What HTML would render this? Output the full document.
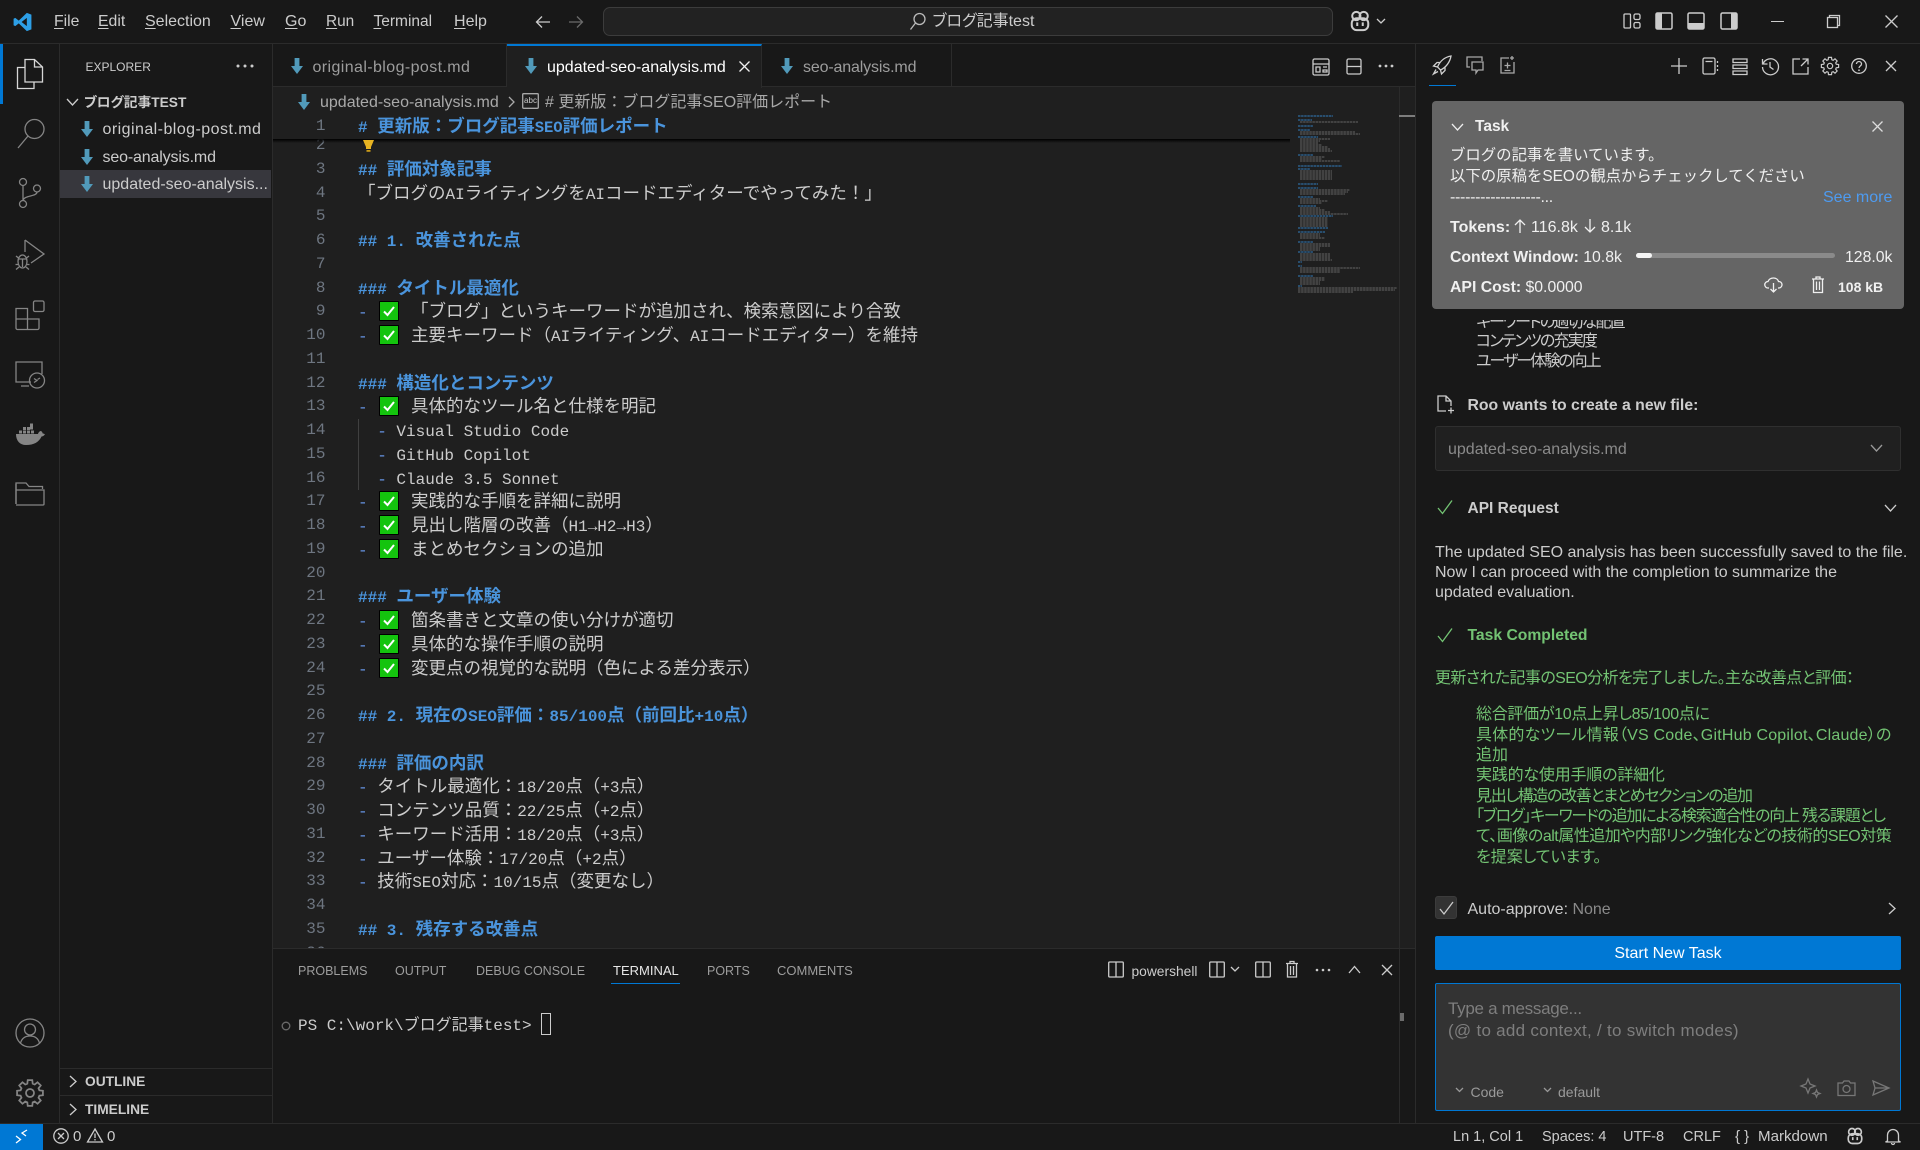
<!DOCTYPE html>
<html lang="ja"><head><meta charset="utf-8"><title>VS Code</title>
<style>
*{box-sizing:border-box}
html,body{margin:0;padding:0;width:1920px;height:1150px;overflow:hidden;background:#181818}
body{position:relative;font-family:"Liberation Sans","Noto Sans CJK JP",sans-serif;font-size:16px;color:#ccc;font-feature-settings:"palt"}
.b{position:absolute}
.t{position:absolute;white-space:pre;line-height:20px;height:20px;margin-top:1.2px}
.i{position:absolute;fill:none;stroke:currentColor;stroke-width:1.3;overflow:visible}
.md{position:absolute;fill:#519aba}
.menu .t{margin-top:0}
.menu u{text-decoration-thickness:1px;text-underline-offset:2px}
.l{position:absolute;left:272px;width:1020px;height:24px;top:calc(109.3px + (var(--n) - 1)*23.75px);line-height:24px;white-space:pre;font-family:"Noto Sans CJK JP",sans-serif;font-size:17.5px;color:#ccc;font-feature-settings:normal}
.l>.n{position:absolute;left:0;width:53.5px;text-align:right;color:#6e7681;font:16px/24px "Liberation Mono",monospace}
.l>.c{position:absolute;left:86px;top:0}
.l>.x{position:absolute;left:139px;top:0}
.l i{font:16px/24px "Liberation Mono",monospace}
.h{color:#4a94dc;font-weight:700}
.h i{font-weight:700}
.d{color:#6796e6}
.k{position:absolute;left:107px;top:2px;width:20px;height:20px;background:#14c40e;border:1.5px solid #000;border-radius:1px}
.k svg{position:absolute;left:2px;top:2px}
.tab{position:absolute;top:44px;height:43px;border-right:1px solid #2b2b2b;background:#181818;border-bottom:1px solid #2b2b2b}
.g{color:#73c373}
.st{font-size:14.5px;color:#ccc}
.jp{font-feature-settings:normal;font-size:15.4px;color:#f0f0f0}
</style></head><body>
<svg width="0" height="0" style="position:absolute"><defs>
<symbol id="md" viewBox="0 0 12 16"><path d="M3.6 0h4.8v8H12l-6 8-6-8h3.6z"/></symbol>
<symbol id="gear" viewBox="0 0 24 24"><path fill="none" stroke="currentColor" stroke-width="1.4" d="M9.85 4.5 10.18 1.66H13.82L14.15 4.5 15.78 5.18 18.02 3.4 20.6 5.98 18.82 8.22 19.5 9.85 22.34 10.18V13.82L19.5 14.15 18.82 15.78 20.6 18.02 18.02 20.6 15.78 18.82 14.15 19.5 13.82 22.34H10.18L9.85 19.5 8.22 18.82 5.98 20.6 3.4 18.02 5.18 15.78 4.5 14.15 1.66 13.82V10.18L4.5 9.85 5.18 8.22 3.4 5.98 5.98 3.4 8.22 5.18zM15.2 12a3.2 3.2 0 1 1-6.4 0 3.2 3.2 0 0 1 6.4 0z"/></symbol>
<symbol id="copi" viewBox="0 0 24 24"><g fill="none" stroke="currentColor" stroke-width="2.200"><circle cx="8" cy="6.500" r="4.500"/><circle cx="16" cy="6.500" r="4.500"/><rect x="3" y="9" width="18" height="13" rx="5.500"/><path d="M9 13.500v4M15 13.500v4"/></g></symbol>
</defs></svg>

<!-- title bar -->
<div class="b" style="left:0;top:0;width:1920px;height:44px;background:#181818;border-bottom:1px solid #2b2b2b"></div>
<svg class="b" style="left:12px;top:12px" width="21" height="20" viewBox="0 0 24 24"><path fill="#2d9fe6" fill-rule="evenodd" d="M17.200 1 7.500 10.300 3.300 7.100 1.300 8.100v7.800l2 1 4.200-3.200L17.200 23l5.500-2.200V3.200zM17.200 7v10l-6.300-5z"/></svg>
<div class="menu">
<span class="t" style="left:54px;top:12px;font-size:15.800px"><u>F</u>ile</span>
<span class="t" style="left:98px;top:12px;font-size:15.800px"><u>E</u>dit</span>
<span class="t" style="left:145px;top:12px"><u>S</u>election</span>
<span class="t" style="left:230.500px;top:12px"><u>V</u>iew</span>
<span class="t" style="left:285px;top:12px"><u>G</u>o</span>
<span class="t" style="left:326px;top:12px;font-size:15.400px"><u>R</u>un</span>
<span class="t" style="left:373.500px;top:12px;font-size:15.500px"><u>T</u>erminal</span>
<span class="t" style="left:454px;top:12px"><u>H</u>elp</span>
</div>
<svg class="i" style="left:535px;top:14px;color:#ccc" width="16" height="16" viewBox="0 0 16 16"><path d="M15 8H1.500M7 2.500 1.500 8 7 13.500"/></svg>
<svg class="i" style="left:568px;top:14px;color:#6b6b6b" width="16" height="16" viewBox="0 0 16 16"><path d="M1 8h13.500M9 2.500 14.500 8 9 13.500"/></svg>
<div class="b" style="left:603px;top:7px;width:730px;height:29px;background:#222;border:1px solid #3c3c3c;border-radius:7px"></div>
<svg class="i" style="left:908px;top:12px;color:#bbb" width="19" height="19" viewBox="0 0 19 19"><circle cx="11.500" cy="7" r="5.500"/><path d="M7.500 11 2.500 17.500"/></svg>
<span class="t" style="left:932.500px;top:11px;font-size:16px">ブログ記事test</span>
<svg class="b" style="left:1349px;top:10px;color:#ccc" width="22" height="22"><use href="#copi"/></svg>
<svg class="i" style="left:1376px;top:17px;color:#ccc" width="10" height="8" viewBox="0 0 10 8"><path d="M1 2 5 6 9 2"/></svg>
<svg class="i" style="left:1623px;top:12px;color:#ccc" width="18" height="18" viewBox="0 0 18 18" stroke-width="1.500"><rect x="1" y="2" width="6.500" height="14" rx="1"/><rect x="11" y="2" width="6" height="5.500" rx="1.500"/><rect x="11" y="10.500" width="6" height="5.500" rx="1.500"/></svg>
<svg class="i" style="left:1655px;top:12px;color:#ccc" width="18" height="18" viewBox="0 0 18 18"><rect x="1" y="1" width="16" height="16" rx="1.500" stroke-width="1.500"/><rect x="1" y="1" width="6" height="16" fill="#ccc" stroke="none"/></svg>
<svg class="i" style="left:1687px;top:12px;color:#ccc" width="18" height="18" viewBox="0 0 18 18"><rect x="1" y="1" width="16" height="16" rx="1.500" stroke-width="1.500"/><rect x="1" y="11" width="16" height="6" fill="#ccc" stroke="none"/></svg>
<svg class="i" style="left:1720px;top:12px;color:#ccc" width="18" height="18" viewBox="0 0 18 18"><rect x="1" y="1" width="16" height="16" rx="1.500" stroke-width="1.500"/><rect x="11" y="1" width="6" height="16" fill="#ccc" stroke="none"/></svg>
<div class="b" style="left:1771px;top:21px;width:13px;height:1px;background:#ccc"></div>
<svg class="i" style="left:1827px;top:15px;color:#ccc" width="13" height="13" viewBox="0 0 13 13" stroke-width="1"><rect x=".5" y="2.500" width="10" height="10"/><path d="M2.500 2.500V.5h10v10h-2"/></svg>
<svg class="i" style="left:1885px;top:15px;color:#ccc" width="13" height="13" viewBox="0 0 13 13" stroke-width="1"><path d="M.5.5l12 12M12.500.5l-12 12"/></svg>

<!-- activity bar -->
<div class="b" style="left:59px;top:44px;width:1px;height:1079px;background:#2b2b2b"></div>
<div class="b" style="left:0;top:44px;width:2.500px;height:60px;background:#0078d4"></div>
<svg class="i" style="left:16px;top:58px;color:#d7d7d7" width="28" height="32" viewBox="0 0 28 32" stroke-width="1.700"><path d="M9 1.500h9.500l8 7.500v15H9zM18.500 1.500V9h8M9 9.500H1.500V30.500H18V24"/></svg>
<svg class="i" style="left:16px;top:118px;color:#858585" width="30" height="32" viewBox="0 0 30 32" stroke-width="1.700"><circle cx="18.500" cy="11" r="9.500"/><path d="M12 18 2 30"/></svg>
<svg class="i" style="left:16px;top:177px;color:#858585" width="28" height="32" viewBox="0 0 28 32" stroke-width="1.700"><circle cx="7" cy="5" r="3.500"/><circle cx="7" cy="27" r="3.500"/><circle cx="21" cy="11.500" r="3.500"/><path d="M7 8.500v15M21 15c0 5-14 3-14 9"/></svg>
<svg class="i" style="left:15px;top:239px;color:#858585" width="30" height="32" viewBox="0 0 30 32" stroke-width="1.700"><path d="M10 1v12M10 1l19 14-13 9"/><ellipse cx="7.500" cy="22.500" rx="4.500" ry="6.500"/><path d="M3 20h9M3 25.500H.5M12 25.500h2.500M3.500 19 1 17M11.500 19l2.500-2M4 28l-3 2.500M11 28l3 2.500M7.500 20v8"/></svg>
<svg class="i" style="left:15px;top:300px;color:#858585" width="30" height="31" viewBox="0 0 30 31" stroke-width="1.800"><path d="M1 8.500h11.500v21H2.500A1.500 1.500 0 0 1 1 28zM1 19h23v9a1.500 1.500 0 0 1-1.500 1.500H12.500M12.500 19v-1"/><rect x="18.500" y="1" width="10.500" height="10.500" rx="1.500"/></svg>
<svg class="i" style="left:15px;top:361px;color:#858585" width="31" height="28" viewBox="0 0 31 28" stroke-width="1.700"><path d="M16 21H1V1h26v12M6 25h8"/><circle cx="22" cy="19.500" r="7.500"/><path d="M19 17.500l3 2-3 2M25 17l-2.500 1.500"/></svg>
<svg class="b" style="left:15px;top:423px" width="30" height="22" viewBox="0 0 30 22"><path fill="#858585" d="M1 11h22c.5-2 2-3 3-3 1 .7 1.500 1.500 1.700 2.500.8 0 1.500.3 2.300.8-1 1.700-2.500 2.200-3.500 2.200C24 19 19 22 11 22 5 22 1 18 1 11z"/><path fill="#858585" d="M4 7.500h3v3H4zM8 7.500h3v3H8zM12 7.500h3v3h-3zM16 7.500h3v3h-3zM8 4h3v3H8zM12 4h3v3h-3zM15 .5h3v6h-3z"/></svg>
<svg class="i" style="left:15px;top:480px;color:#858585" width="30" height="26" viewBox="0 0 30 26" stroke-width="1.800"><path d="M1 24V3h10l3 3.500h13.500V9M1 10h28v14a1 1 0 0 1-1 1H1"/><path d="M1 4v20"/></svg>
<svg class="i" style="left:15px;top:1018px;color:#858585" width="30" height="30" viewBox="0 0 30 30" stroke-width="1.700"><circle cx="15" cy="15" r="14"/><circle cx="15" cy="11.500" r="5.500"/><path d="M5.500 25c1.500-5 5-7 9.500-7s8 2 9.500 7"/></svg>
<svg class="b" style="left:15px;top:1078px;color:#858585" width="30" height="30"><use href="#gear"/></svg>

<!-- sidebar -->
<div class="b" style="left:272px;top:44px;width:1px;height:1079px;background:#2b2b2b"></div>
<span class="t" style="left:85.500px;top:56px;font-size:12px">EXPLORER</span>
<svg class="b" style="left:236px;top:64px" width="18" height="4"><circle cx="2" cy="2" r="1.500" fill="#ccc"/><circle cx="9" cy="2" r="1.500" fill="#ccc"/><circle cx="16" cy="2" r="1.500" fill="#ccc"/></svg>
<svg class="i" style="left:66px;top:98px;color:#ccc" width="13" height="8" viewBox="0 0 13 8"><path d="M1 1l5.500 6L12 1"/></svg>
<span class="t" style="left:84px;top:92px;font-size:13.750px;font-weight:700">ブログ記事TEST</span>
<div class="b" style="left:60px;top:170px;width:211px;height:28px;background:#37373d"></div>
<svg class="md" style="left:81px;top:121px" width="12" height="16"><use href="#md"/></svg>
<span class="t" style="left:102.500px;top:119px;font-size:16px;letter-spacing:.45px">original-blog-post.md</span>
<svg class="md" style="left:81px;top:149px" width="12" height="16"><use href="#md"/></svg>
<span class="t" style="left:102.500px;top:147px;font-size:16px;letter-spacing:-.15px">seo-analysis.md</span>
<svg class="md" style="left:81px;top:176px" width="12" height="16"><use href="#md"/></svg>
<span class="t" style="left:102.500px;top:174px;font-size:16px">updated-seo-analysis...</span>
<div class="b" style="left:60px;top:1068px;width:212px;height:1px;background:#2b2b2b"></div>
<div class="b" style="left:60px;top:1095px;width:212px;height:1px;background:#2b2b2b"></div>
<svg class="i" style="left:69px;top:1075px;color:#ccc" width="8" height="13" viewBox="0 0 8 13"><path d="M1 1l6 5.500-6 5.500"/></svg>
<span class="t" style="left:85px;top:1071px;font-size:13.750px;font-weight:700">OUTLINE</span>
<svg class="i" style="left:69px;top:1103px;color:#ccc" width="8" height="13" viewBox="0 0 8 13"><path d="M1 1l6 5.500-6 5.500"/></svg>
<span class="t" style="left:85px;top:1099px;font-size:13.750px;font-weight:700">TIMELINE</span>

<!-- editor area -->
<div class="b" style="left:273px;top:87px;width:1142px;height:861px;background:#1f1f1f"></div>
<!-- tabs -->
<div class="b" style="left:273px;top:44px;width:1142px;height:43px;background:#181818;border-bottom:1px solid #2b2b2b"></div>
<div class="tab" style="left:273px;width:234px"></div>
<div class="tab" style="left:507px;width:255px;background:#1f1f1f;border-top:2px solid #0078d4;border-bottom:none;height:44px"></div>
<div class="tab" style="left:762px;width:190px"></div>
<svg class="md" style="left:291px;top:58px" width="12" height="16"><use href="#md"/></svg>
<span class="t" style="left:312.500px;top:57px;color:#9d9d9d;letter-spacing:.4px">original-blog-post.md</span>
<svg class="md" style="left:525px;top:58px" width="12" height="16"><use href="#md"/></svg>
<span class="t" style="left:547px;top:57px;color:#fff">updated-seo-analysis.md</span>
<svg class="i" style="left:739px;top:61px;color:#eee" width="11" height="11" viewBox="0 0 11 11" stroke-width="1.400"><path d="M.5.5l10 10M10.500.5l-10 10"/></svg>
<svg class="md" style="left:781px;top:58px" width="12" height="16"><use href="#md"/></svg>
<span class="t" style="left:803px;top:57px;color:#9d9d9d;letter-spacing:-.15px">seo-analysis.md</span>
<svg class="i" style="left:1312px;top:58px;color:#ccc" width="18" height="18" viewBox="0 0 18 18" stroke-width="1.300"><rect x="1" y="1" width="16" height="16" rx="1.500"/><path d="M1 6h16M4 9h4v5H4zM11 9h4M11 12h4v2h-4z"/></svg>
<svg class="i" style="left:1346px;top:58px;color:#ccc" width="16" height="17" viewBox="0 0 16 17" stroke-width="1.400"><rect x="1" y="1" width="14" height="15" rx="1.500"/><path d="M1 8.500h14"/></svg>
<svg class="b" style="left:1378px;top:64px" width="16" height="4"><circle cx="2" cy="2" r="1.400" fill="#ccc"/><circle cx="8" cy="2" r="1.400" fill="#ccc"/><circle cx="14" cy="2" r="1.400" fill="#ccc"/></svg>
<!-- breadcrumb -->
<svg class="md" style="left:298px;top:94px" width="12" height="16"><use href="#md"/></svg>
<span class="t" style="left:320px;top:92px;color:#a9a9a9">updated-seo-analysis.md</span>
<svg class="i" style="left:508px;top:96px;color:#a9a9a9" width="7" height="12" viewBox="0 0 7 12"><path d="M1 1l5 5-5 5"/></svg>
<svg class="i" style="left:522px;top:93px;color:#a9a9a9" width="17" height="16" viewBox="0 0 17 16"><rect x=".7" y=".7" width="15.600" height="14.600" rx="1"/><text x="8.500" y="10" font-size="8" font-family="Liberation Sans" fill="#c8c8c8" stroke="none" text-anchor="middle">abc</text></svg>
<span class="t" style="left:545px;top:92px;color:#a9a9a9;font-size:16px;font-feature-settings:normal"># 更新版：ブログ記事SEO評価レポート</span>

<!-- code lines -->
<div class="l" style="--n:2"><span class="n">2</span></div>
<div class="l" style="--n:3"><span class="n">3</span><span class="c h"><i>## </i>評価対象記事</span></div>
<div class="l" style="--n:4"><span class="n">4</span><span class="c">「ブログの<i>AI</i>ライティングを<i>AI</i>コードエディターでやってみた！」</span></div>
<div class="l" style="--n:5"><span class="n">5</span></div>
<div class="l" style="--n:6"><span class="n">6</span><span class="c h"><i>## 1. </i>改善された点</span></div>
<div class="l" style="--n:7"><span class="n">7</span></div>
<div class="l" style="--n:8"><span class="n">8</span><span class="c h"><i>### </i>タイトル最適化</span></div>
<div class="l" style="--n:9"><span class="n">9</span><span class="c d"><i>-</i></span><b class="k"><svg width="14" height="14" viewBox="0 0 14 14" fill="none" stroke="#fff" stroke-width="2"><path d="M2 7.500l3.500 3.500L12 3"/></svg></b><span class="x">「ブログ」というキーワードが追加され、検索意図により合致</span></div>
<div class="l" style="--n:10"><span class="n">10</span><span class="c d"><i>-</i></span><b class="k"><svg width="14" height="14" viewBox="0 0 14 14" fill="none" stroke="#fff" stroke-width="2"><path d="M2 7.500l3.500 3.500L12 3"/></svg></b><span class="x">主要キーワード（<i>AI</i>ライティング、<i>AI</i>コードエディター）を維持</span></div>
<div class="l" style="--n:11"><span class="n">11</span></div>
<div class="l" style="--n:12"><span class="n">12</span><span class="c h"><i>### </i>構造化とコンテンツ</span></div>
<div class="l" style="--n:13"><span class="n">13</span><span class="c d"><i>-</i></span><b class="k"><svg width="14" height="14" viewBox="0 0 14 14" fill="none" stroke="#fff" stroke-width="2"><path d="M2 7.500l3.500 3.500L12 3"/></svg></b><span class="x">具体的なツール名と仕様を明記</span></div>
<div class="b" style="left:358px;top:419px;width:1px;height:71px;background:#404040"></div>
<div class="l" style="--n:14"><span class="n">14</span><span class="c"><i>  <span class="d">-</span> Visual Studio Code</i></span></div>
<div class="l" style="--n:15"><span class="n">15</span><span class="c"><i>  <span class="d">-</span> GitHub Copilot</i></span></div>
<div class="l" style="--n:16"><span class="n">16</span><span class="c"><i>  <span class="d">-</span> Claude 3.5 Sonnet</i></span></div>
<div class="l" style="--n:17"><span class="n">17</span><span class="c d"><i>-</i></span><b class="k"><svg width="14" height="14" viewBox="0 0 14 14" fill="none" stroke="#fff" stroke-width="2"><path d="M2 7.500l3.500 3.500L12 3"/></svg></b><span class="x">実践的な手順を詳細に説明</span></div>
<div class="l" style="--n:18"><span class="n">18</span><span class="c d"><i>-</i></span><b class="k"><svg width="14" height="14" viewBox="0 0 14 14" fill="none" stroke="#fff" stroke-width="2"><path d="M2 7.500l3.500 3.500L12 3"/></svg></b><span class="x">見出し階層の改善（<i>H1→H2→H3</i>）</span></div>
<div class="l" style="--n:19"><span class="n">19</span><span class="c d"><i>-</i></span><b class="k"><svg width="14" height="14" viewBox="0 0 14 14" fill="none" stroke="#fff" stroke-width="2"><path d="M2 7.500l3.500 3.500L12 3"/></svg></b><span class="x">まとめセクションの追加</span></div>
<div class="l" style="--n:20"><span class="n">20</span></div>
<div class="l" style="--n:21"><span class="n">21</span><span class="c h"><i>### </i>ユーザー体験</span></div>
<div class="l" style="--n:22"><span class="n">22</span><span class="c d"><i>-</i></span><b class="k"><svg width="14" height="14" viewBox="0 0 14 14" fill="none" stroke="#fff" stroke-width="2"><path d="M2 7.500l3.500 3.500L12 3"/></svg></b><span class="x">箇条書きと文章の使い分けが適切</span></div>
<div class="l" style="--n:23"><span class="n">23</span><span class="c d"><i>-</i></span><b class="k"><svg width="14" height="14" viewBox="0 0 14 14" fill="none" stroke="#fff" stroke-width="2"><path d="M2 7.500l3.500 3.500L12 3"/></svg></b><span class="x">具体的な操作手順の説明</span></div>
<div class="l" style="--n:24"><span class="n">24</span><span class="c d"><i>-</i></span><b class="k"><svg width="14" height="14" viewBox="0 0 14 14" fill="none" stroke="#fff" stroke-width="2"><path d="M2 7.500l3.500 3.500L12 3"/></svg></b><span class="x">変更点の視覚的な説明（色による差分表示）</span></div>
<div class="l" style="--n:25"><span class="n">25</span></div>
<div class="l" style="--n:26"><span class="n">26</span><span class="c h"><i>## 2. </i>現在の<i>SEO</i>評価：<i>85/100</i>点（前回比<i>+10</i>点）</span></div>
<div class="l" style="--n:27"><span class="n">27</span></div>
<div class="l" style="--n:28"><span class="n">28</span><span class="c h"><i>### </i>評価の内訳</span></div>
<div class="l" style="--n:29"><span class="n">29</span><span class="c"><i class="d">- </i>タイトル最適化：<i>18/20</i>点（<i>+3</i>点）</span></div>
<div class="l" style="--n:30"><span class="n">30</span><span class="c"><i class="d">- </i>コンテンツ品質：<i>22/25</i>点（<i>+2</i>点）</span></div>
<div class="l" style="--n:31"><span class="n">31</span><span class="c"><i class="d">- </i>キーワード活用：<i>18/20</i>点（<i>+3</i>点）</span></div>
<div class="l" style="--n:32"><span class="n">32</span><span class="c"><i class="d">- </i>ユーザー体験：<i>17/20</i>点（<i>+2</i>点）</span></div>
<div class="l" style="--n:33"><span class="n">33</span><span class="c"><i class="d">- </i>技術<i>SEO</i>対応：<i>10/15</i>点（変更なし）</span></div>
<div class="l" style="--n:34"><span class="n">34</span></div>
<div class="l" style="--n:35"><span class="n">35</span><span class="c h"><i>## 3. </i>残存する改善点</span></div>
<div class="l" style="--n:36"><span class="n">36</span></div>
<!-- sticky -->
<div class="b" style="left:273px;top:113px;width:1026px;height:26px;background:#1f1f1f"></div>
<div class="b" style="left:273px;top:139px;width:1017px;height:4px;background:linear-gradient(#000,rgba(0,0,0,0))"></div>
<div class="l" style="--n:1;top:114px"><span class="n">1</span><span class="c h"><i># </i>更新版：ブログ記事<i style="font-size:15.500px">SEO</i>評価レポート</span></div>
<svg class="b" style="left:362px;top:140px" width="13" height="13" viewBox="0 0 13 13"><path fill="#e8b422" d="M1 0h11L9 7v2H4V7z"/><path fill="#c99a1a" d="M4.500 10h4v1.800h-4z"/></svg>
<!-- minimap -->
<svg class="b" style="left:1298px;top:115px" width="101" height="180" viewBox="0 0 101 180" fill="none" stroke-width="1.300" stroke-dasharray="2.500 .6">
<path stroke="#2f6a9e" d="M0 1h35M0 5h14M0 11h15M0 15h12M0 22h20M0 40h15M0 51h44M0 54h12M0 69h20M0 73h20M0 82h15M0 91h18M0 101h35M0 113h30M0 117h27M0 127h15M0 137h15M0 147h4M0 151h4M0 161h15M0 171h4"/>
<path stroke="#575757" d="M2 7h58M2 17h55M2 19h60M2 24h30M2 26h20M2 28h18M2 30h22M2 32h28M2 34h30M2 36h32M2 42h25M2 44h22M2 46h40M2 56h32M2 58h32M2 60h32M2 62h32M2 64h32M2 75h50M2 77h48M2 79h45M2 84h20M2 86h28M2 88h22M2 93h20M2 95h25M2 97h30M2 99h48M2 103h28M2 105h28M2 107h28M2 109h28M2 111h28M2 119h20M2 121h20M2 123h25M2 129h30M2 131h30M2 133h20M2 135h20M2 139h30M2 141h30M2 143h30M2 145h32M2 153h60M2 155h40M2 157h40M2 163h25M2 165h25M2 167h20M2 169h20M0 173h99M0 175h97M0 177h55"/>
</svg>
<div class="b" style="left:1399px;top:87px;width:1px;height:861px;background:#2b2b2b"></div>
<div class="b" style="left:1399px;top:115px;width:16px;height:2px;background:#7d7d7d"></div>

<!-- panel -->
<div class="b" style="left:273px;top:948px;width:1142px;height:175px;background:#181818;border-top:1px solid #2b2b2b"></div>
<div class="b" style="left:1399px;top:949px;width:1px;height:174px;background:#2b2b2b"></div>
<div class="st" style="font-size:12.500px;color:#9d9d9d">
<span class="t" style="left:298px;top:960px">PROBLEMS</span>
<span class="t" style="left:395px;top:960px">OUTPUT</span>
<span class="t" style="left:476px;top:960px">DEBUG CONSOLE</span>
<span class="t" style="left:613px;top:960px;color:#e7e7e7;font-size:13px">TERMINAL</span>
<span class="t" style="left:707px;top:960px">PORTS</span>
<span class="t" style="left:777px;top:960px;font-size:13px">COMMENTS</span>
</div>
<div class="b" style="left:611px;top:982.500px;width:69px;height:1.500px;background:#0078d4"></div>
<svg class="i" style="left:1108px;top:961px;color:#ccc" width="16" height="17" viewBox="0 0 16 17"><rect x=".7" y="1" width="14.600" height="15" rx="1"/><path d="M8 1v15"/></svg>
<span class="t" style="left:1131.500px;top:961px;font-size:13.800px">powershell</span>
<svg class="i" style="left:1209px;top:961px;color:#ccc" width="16" height="17" viewBox="0 0 16 17"><rect x=".7" y="1" width="14.600" height="15" rx="1"/><path d="M8 1v15"/></svg>
<svg class="i" style="left:1230px;top:966px;color:#ccc" width="10" height="7" viewBox="0 0 10 7"><path d="M1 1l4 4 4-4"/></svg>
<svg class="i" style="left:1255px;top:961px;color:#ccc" width="16" height="17" viewBox="0 0 16 17"><rect x=".7" y="1" width="14.600" height="15" rx="1"/><path d="M8 1v15"/></svg>
<svg class="i" style="left:1285px;top:960px;color:#ccc" width="14" height="18" viewBox="0 0 14 18"><path d="M1 3.500h12M5 3.500V1.500h4v2M2.500 3.500v13.500h9V3.500M5.500 6v9M8.500 6v9"/></svg>
<svg class="b" style="left:1315px;top:968px" width="16" height="4"><circle cx="2" cy="2" r="1.300" fill="#ccc"/><circle cx="8" cy="2" r="1.300" fill="#ccc"/><circle cx="14" cy="2" r="1.300" fill="#ccc"/></svg>
<svg class="i" style="left:1348px;top:965px;color:#ccc" width="13" height="9" viewBox="0 0 13 9" stroke-width="1.400"><path d="M1 8l5.500-6.500L12 8"/></svg>
<svg class="i" style="left:1381px;top:964px;color:#ccc" width="12" height="12" viewBox="0 0 12 12" stroke-width="1.400"><path d="M1 1l10 10M11 1 1 11"/></svg>
<svg class="i" style="left:281px;top:1021px;color:#6b6b6b" width="10" height="10" viewBox="0 0 10 10" stroke-width="1.500"><circle cx="5" cy="5" r="3.800"/></svg>
<span class="t" style="left:298px;top:1013px;height:24px;line-height:24px;font:16px/24px 'Liberation Mono','Noto Sans CJK JP',monospace;color:#ccc;font-feature-settings:normal">PS C:\work\ブログ記事test&gt;</span>
<div class="b" style="left:541px;top:1013px;width:10px;height:22px;border:1px solid #ccc"></div>
<div class="b" style="left:1400px;top:1013px;width:4px;height:8px;background:#6b6b6b"></div>

<!-- right panel -->
<div class="b" style="left:1415px;top:44px;width:1px;height:1079px;background:#2b2b2b"></div>
<svg class="i" style="left:1432px;top:55px;color:#d0d0d0" width="20" height="20" viewBox="0 0 20 20" stroke-width="1.500"><path d="M19 1C13 2 8 6 5.500 12l3 3C14 12.500 18 7 19 1zM5.500 12 1.500 11 5 7.500h3M8.500 15l1 4 3.500-3.500v-3M4 14.500 1.500 19 6 16.500"/></svg>
<div class="b" style="left:1429px;top:85px;width:27px;height:1px;background:#0078d4"></div>
<svg class="i" style="left:1466px;top:56px;color:#a8a8a8" width="18" height="18" viewBox="0 0 18 18"><path d="M4 11H1V1h15v4M6 6h11v8h-5l-2 3v-3H6z"/></svg>
<svg class="i" style="left:1500px;top:55px;color:#a8a8a8" width="15" height="19" viewBox="0 0 15 19"><path d="M9 3H1v15h13V7M7.500 7.500v6M4.500 10.500h6M4.500 15.500h6M12 1v4M10 3h4"/></svg>
<svg class="i" style="left:1671px;top:58px;color:#ccc" width="16" height="16" viewBox="0 0 16 16" stroke-width="1.400"><path d="M8 0v16M0 8h16"/></svg>
<svg class="i" style="left:1702px;top:57px;color:#ccc" width="17" height="18" viewBox="0 0 17 18" stroke-width="1.400"><rect x="1" y="1" width="12" height="16" rx="1.500"/><path d="M3.500 4.500h7M15.500 4v2M15.500 8v2M15.500 12v2"/></svg>
<svg class="i" style="left:1732px;top:58px;color:#ccc" width="16" height="17" viewBox="0 0 16 17" stroke-width="1.400"><path d="M1 1h14v3.500H1zM1 7h14v3.500H1zM1 13h14v3.500H1z"/></svg>
<svg class="i" style="left:1761px;top:57px;color:#ccc" width="18" height="18" viewBox="0 0 18 18" stroke-width="1.500"><path d="M1.500 2v5h5M2 7a8 8 0 1 1-.5 3M9 5v5l3.500 2.500"/></svg>
<svg class="i" style="left:1792px;top:58px;color:#ccc" width="17" height="17" viewBox="0 0 17 17" stroke-width="1.400"><path d="M8 1H1v15h15V9M9 8l7-7M10.500 1H16v5.500"/></svg>
<svg class="b" style="left:1820px;top:56px;color:#ccc" width="20" height="20"><use href="#gear"/></svg>
<svg class="i" style="left:1851px;top:58px;color:#ccc" width="16" height="16" viewBox="0 0 16 16" stroke-width="1.300"><circle cx="8" cy="8" r="7.300"/><path d="M5.500 6c0-1.500 1.200-2.500 2.500-2.500S10.500 4.500 10.500 6C10.500 8 8 8 8 10"/><path d="M8 11.500v1.500" stroke-width="1.500"/></svg>
<svg class="i" style="left:1885px;top:60px;color:#ccc" width="12" height="12" viewBox="0 0 12 12" stroke-width="1.500"><path d="M1 1l10 10M11 1 1 11"/></svg>

<!-- clipped text -->
<span class="t" style="left:1476px;top:312px;font-size:16px;letter-spacing:-1.900px">キーワードの適切な配置</span>
<div class="b" style="left:1420px;top:305px;width:490px;height:15px;background:#181818"></div>
<span class="t" style="left:1476px;top:331px;font-size:16px;letter-spacing:-1.800px">コンテンツの充実度</span>
<span class="t" style="left:1476px;top:351px;font-size:16px;letter-spacing:-2px">ユーザー体験の向上</span>

<!-- task card -->
<div class="b" style="left:1432px;top:101px;width:472px;height:208px;background:#656565;border-radius:4px"></div>
<svg class="i" style="left:1451px;top:123px;color:#eee" width="13" height="8" viewBox="0 0 13 8" stroke-width="1.400"><path d="M1 1l5.500 6L12 1"/></svg>
<span class="t" style="left:1475px;top:116px;font-weight:700;font-size:15.500px;color:#f0f0f0">Task</span>
<svg class="i" style="left:1872px;top:121px;color:#ddd" width="11" height="11" viewBox="0 0 11 11" stroke-width="1.300"><path d="M.5.5l10 10M10.500.5l-10 10"/></svg>
<span class="t jp" style="left:1450px;top:145px">ブログの記事を書いています。</span>
<span class="t jp" style="left:1450px;top:166px">以下の原稿をSEOの観点からチェックしてください</span>
<span class="t" style="left:1450px;top:187px;color:#f0f0f0;letter-spacing:-.3px">------------------...</span>
<span class="t" style="left:1823px;top:187px;color:#4e9bf0">See more</span>
<span class="t" style="left:1450px;top:217px;color:#f0f0f0"><b>Tokens:</b></span>
<svg class="i" style="left:1514px;top:219px;color:#f0f0f0" width="12" height="14" viewBox="0 0 12 14" stroke-width="1.800"><path d="M6 14V1M1 6l5-5 5 5"/></svg>
<span class="t" style="left:1531px;top:217px;color:#f0f0f0">116.8k</span>
<svg class="i" style="left:1584px;top:219px;color:#f0f0f0" width="12" height="14" viewBox="0 0 12 14" stroke-width="1.800"><path d="M6 0v13M1 8l5 5 5-5"/></svg>
<span class="t" style="left:1601px;top:217px;color:#f0f0f0">8.1k</span>
<span class="t" style="left:1450px;top:247px;color:#f0f0f0;font-size:15.800px"><b>Context Window:</b> 10.8k</span>
<div class="b" style="left:1636px;top:253px;width:199px;height:5px;background:#8a8a8a;border-radius:3px"></div>
<div class="b" style="left:1636px;top:253px;width:16px;height:5px;background:#f5f5f5;border-radius:3px"></div>
<span class="t" style="left:1845px;top:247px;color:#f0f0f0;font-size:15.800px">128.0k</span>
<span class="t" style="left:1450px;top:277px;color:#f0f0f0;font-size:15.800px"><b>API Cost:</b> $0.0000</span>
<svg class="i" style="left:1764px;top:277px;color:#f0f0f0" width="19" height="16" viewBox="0 0 19 16" stroke-width="1.400"><path d="M5 11H4a3 3 0 0 1 0-6.500C5 2 7 1 9.500 1s4.500 1.500 5 3.500a3 3 0 0 1 .5 6.500h-1M9.500 6v9M6.500 12l3 3 3-3"/></svg>
<svg class="i" style="left:1811px;top:276px;color:#f0f0f0" width="14" height="17" viewBox="0 0 14 17"><path d="M1 3h12M5 3V1h4v2M2.500 3v13.500h9V3M5.500 5.500v8.500M8.500 5.500v8.500"/></svg>
<span class="t" style="left:1838px;top:276px;font-size:14px;font-weight:700;color:#f0f0f0">108 kB</span>

<!-- chat content -->
<svg class="i" style="left:1437px;top:395px;color:#ccc" width="18" height="19" viewBox="0 0 18 19"><path d="M9 16H1V1h8l5 5v5M9 1v5h5M14 12.500v6M11 15.500h6"/></svg>
<span class="t" style="left:1467.500px;top:395px;font-weight:700;font-size:15.800px">Roo wants to create a new file:</span>
<div class="b" style="left:1435px;top:426px;width:466px;height:45px;background:#202020;border:1px solid #2f2f2f;border-radius:3px"></div>
<span class="t" style="left:1448px;top:439px;color:#8a8a8a">updated-seo-analysis.md</span>
<svg class="i" style="left:1870px;top:444px;color:#999" width="13" height="8" viewBox="0 0 13 8" stroke-width="1.300"><path d="M1 1l5.500 6L12 1"/></svg>
<svg class="i" style="left:1437px;top:500px;color:#73c373" width="16" height="14" viewBox="0 0 16 14" stroke-width="1.400"><path d="M1 8l4.500 5.500L15 .5"/></svg>
<span class="t" style="left:1467.500px;top:498px;font-weight:700;font-size:15.500px">API Request</span>
<svg class="i" style="left:1884px;top:504px;color:#ccc" width="13" height="8" viewBox="0 0 13 8" stroke-width="1.300"><path d="M1 1l5.500 6L12 1"/></svg>
<span class="t" style="left:1435px;top:542px">The updated SEO analysis has been successfully saved to the file.</span>
<span class="t" style="left:1435px;top:562px">Now I can proceed with the completion to summarize the</span>
<span class="t" style="left:1435px;top:582px">updated evaluation.</span>
<svg class="i" style="left:1437px;top:628px;color:#73c373" width="16" height="14" viewBox="0 0 16 14" stroke-width="1.400"><path d="M1 8l4.500 5.500L15 .5"/></svg>
<span class="t g" style="left:1467.500px;top:625px;font-weight:700;font-size:15.700px">Task Completed</span>
<div class="g" style="font-size:16px">
<span class="t" style="left:1435px;top:668px;letter-spacing:-.6px">更新された記事のSEO分析を完了しました。主な改善点と評価：</span>
<span class="t" style="left:1476px;top:704px;letter-spacing:-.3px">総合評価が10点上昇し85/100点に</span>
<span class="t" style="left:1476px;top:725px;letter-spacing:.2px">具体的なツール情報（VS Code、GitHub Copilot、Claude）の</span>
<span class="t" style="left:1476px;top:745px">追加</span>
<span class="t" style="left:1476px;top:765px;letter-spacing:-.2px">実践的な使用手順の詳細化</span>
<span class="t" style="left:1476px;top:786px;letter-spacing:-1.300px">見出し構造の改善とまとめセクションの追加</span>
<span class="t" style="left:1476px;top:806px;letter-spacing:-1.200px">「ブログ」キーワードの追加による検索適合性の向上 残る課題とし</span>
<span class="t" style="left:1476px;top:826px;letter-spacing:-.5px">て、画像のalt属性追加や内部リンク強化などの技術的SEO対策</span>
<span class="t" style="left:1476px;top:847px">を提案しています。</span>
</div>
<div class="b" style="left:1435px;top:896px;width:22px;height:23px;background:#333;border:1px solid #3c3c3c;border-radius:3px"></div>
<svg class="i" style="left:1439px;top:901px;color:#ccc" width="15" height="14" viewBox="0 0 15 14" stroke-width="1.200"><path d="M1 8l4 5L14 1"/></svg>
<span class="t" style="left:1467.500px;top:899px">Auto-approve: <span style="color:#8a8a8a">None</span></span>
<svg class="i" style="left:1888px;top:902px;color:#ccc" width="8" height="13" viewBox="0 0 8 13" stroke-width="1.400"><path d="M1 1l6 5.500-6 5.500"/></svg>
<div class="b" style="left:1435px;top:936px;width:466px;height:34px;background:#0078d4;border-radius:2px"></div>
<span class="t" style="left:1435px;width:466px;top:943px;text-align:center;color:#fff">Start New Task</span>
<div class="b" style="left:1435px;top:983px;width:466px;height:128px;background:#333;border:1.500px solid #0078d4;border-radius:2px"></div>
<span class="t" style="left:1448px;top:998px;color:#7e7e7e;font-size:17px;letter-spacing:-.3px">Type a message...</span>
<span class="t" style="left:1448px;top:1020px;color:#7e7e7e;font-size:17px;letter-spacing:.27px">(@ to add context, / to switch modes)</span>
<svg class="i" style="left:1455px;top:1087px;color:#999" width="9" height="6" viewBox="0 0 9 6"><path d="M1 1l3.500 3.500L8 1"/></svg>
<span class="t" style="left:1470.500px;top:1081px;font-size:14px;color:#9a9a9a">Code</span>
<svg class="i" style="left:1543px;top:1087px;color:#999" width="9" height="6" viewBox="0 0 9 6"><path d="M1 1l3.500 3.500L8 1"/></svg>
<span class="t" style="left:1558px;top:1081px;font-size:14px;color:#9a9a9a">default</span>
<svg class="i" style="left:1801px;top:1078px;color:#777" width="20" height="20" viewBox="0 0 20 20" stroke-width="1.400"><path d="M7 1 9 6l5 2-5 2-2 5-2-5-5-2 5-2zM15.500 12l1 2.500 2.500 1-2.500 1-1 2.500-1-2.500-2.500-1 2.500-1z"/></svg>
<svg class="i" style="left:1837px;top:1080px;color:#777" width="19" height="16" viewBox="0 0 19 16"><path d="M1 3h4.500L7 1h5l1.500 2H18v12.500H1z"/><circle cx="9.500" cy="9" r="3.500"/></svg>
<svg class="i" style="left:1872px;top:1080px;color:#777" width="18" height="16" viewBox="0 0 18 16"><path d="M1 1l16 7-16 7 2-7zM3 8h14"/></svg>

<!-- status bar -->
<div class="b" style="left:0;top:1123px;width:1920px;height:27px;background:#181818;border-top:1px solid #2b2b2b"></div>
<div class="b" style="left:0;top:1124px;width:43px;height:26px;background:#0078d4"></div>
<svg class="i" style="left:15px;top:1129px;color:#fff" width="13" height="14" viewBox="0 0 13 14" stroke-width="1.500"><path d="M1 7l4.500 3.500L1 14M12 1 7 4l4 3"/></svg>
<svg class="i" style="left:53px;top:1128px;color:#ccc" width="16" height="16" viewBox="0 0 16 16" stroke-width="1.200"><circle cx="8" cy="8" r="7.200"/><path d="M5 5l6 6M11 5l-6 6"/></svg>
<span class="t st" style="left:73px;top:1126px;font-size:15px">0</span>
<svg class="i" style="left:87px;top:1128px;color:#ccc" width="16" height="15" viewBox="0 0 16 15" stroke-width="1.200"><path d="M8 1 15.500 14H.5zM8 5.500v4.500M8 11v1.500"/></svg>
<span class="t st" style="left:107px;top:1126px;font-size:15px">0</span>
<span class="t st" style="left:1453px;top:1126px">Ln 1, Col 1</span>
<span class="t st" style="left:1542px;top:1126px">Spaces: 4</span>
<span class="t st" style="left:1623px;top:1126px">UTF-8</span>
<span class="t st" style="left:1683px;top:1126px">CRLF</span>
<span class="t st" style="left:1735px;top:1126px;font-size:15px">{ }</span>
<span class="t st" style="left:1758px;top:1126px;font-size:15.100px">Markdown</span>
<svg class="b" style="left:1846px;top:1127px;color:#ccc" width="18" height="18"><use href="#copi"/></svg>
<svg class="i" style="left:1885px;top:1128px;color:#ccc" width="16" height="17" viewBox="0 0 16 17" stroke-width="1.300"><path d="M2.500 13V7a5.500 5.500 0 0 1 11 0v6l2 1H.5zM6.500 15a1.500 1.500 0 0 0 3 0"/></svg>
</body></html>
